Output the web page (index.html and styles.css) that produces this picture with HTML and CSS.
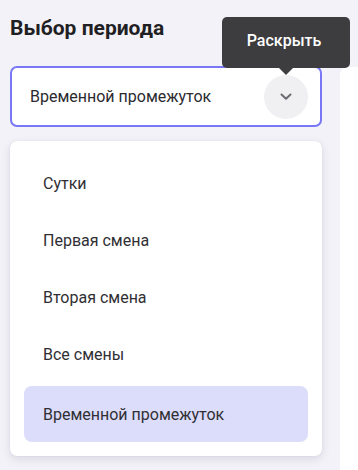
FILE: index.html
```html
<!DOCTYPE html>
<html lang="ru">
<head>
<meta charset="utf-8">
<link rel="stylesheet" href="styles.css">
</head>
<body>
<div class="page">
  <div class="left">
    <h2 class="title">Выбор периода</h2>
    <div class="select">
      <span class="select-value">Временной промежуток</span>
      <button class="toggle" type="button" aria-label="Раскрыть">
        <svg width="12" height="8" viewBox="0 0 12 8"><path d="M1.5 1.5 L6 5.8 L10.5 1.5" fill="none" stroke="#6b6b73" stroke-width="2" stroke-linecap="round" stroke-linejoin="round"/></svg>
        <span class="tooltip">Раскрыть</span>
      </button>
    </div>
    <ul class="menu">
      <li class="item">Сутки</li>
      <li class="item">Первая смена</li>
      <li class="item">Вторая смена</li>
      <li class="item">Все смены</li>
      <li class="item active">Временной промежуток</li>
    </ul>
  </div>
  <div class="side"></div>
</div>
</body>
</html>
```

FILE: styles.css
```css
html, body {
  margin: 0;
  padding: 0;
  background: #f3f2f8;
  font-family: Roboto, "Noto Sans", sans-serif;
  height: 100%;
  overflow: hidden;
}
.page {
  display: flex;
  padding-left: 10px;
  height: 470px;
}
.left {
  width: 312px;
  flex: none;
  padding-top: 14px;
}
.title {
  margin: 0;
  font-size: 21px;
  line-height: 28px;
  font-weight: 700;
  color: #1f1f24;
}
.select {
  margin-top: 24px;
  height: 61px;
  box-sizing: border-box;
  border: 2px solid #7878f6;
  border-radius: 7px;
  background: #fff;
  display: flex;
  align-items: center;
  justify-content: space-between;
  padding: 0 12px 0 18px;
}
.select-value {
  font-size: 16px;
  color: #2b2b2f;
}
.toggle {
  position: relative;
  width: 44px;
  height: 44px;
  border-radius: 50%;
  border: none;
  background: #f0f0f2;
  display: flex;
  align-items: center;
  justify-content: center;
  padding: 0;
}
.tooltip {
  position: absolute;
  bottom: 51px;
  left: 50%;
  transform: translateX(-50%);
  width: 128px;
  height: 51px;
  box-sizing: border-box;
  background: #3d3d3f;
  color: #fff;
  border-radius: 5px;
  font-family: Roboto, sans-serif;
  font-size: 16px;
  font-weight: 500;
  display: flex;
  align-items: center;
  justify-content: center;
  padding: 0 4px 4px 0;
}
.tooltip::after {
  content: "";
  position: absolute;
  top: 100%;
  left: 50%;
  transform: translateX(-50%);
  border-left: 7px solid transparent;
  border-right: 7px solid transparent;
  border-top: 7px solid #3d3d3f;
}
.menu {
  list-style: none;
  margin: 14px 0 0;
  padding: 14px;
  background: #fff;
  border-radius: 7px;
  box-shadow: 0 3px 8px rgba(60, 60, 90, 0.14), 0 0 1px rgba(60,60,90,0.15);
}
.item {
  height: 57px;
  display: flex;
  align-items: center;
  padding-left: 19px;
  font-size: 16px;
  color: #2f2f33;
  border-radius: 8px;
}
.item.active {
  background: #dcdcfb;
  height: 56px;
  margin-top: 3px;
}
.side {
  flex: 1;
  margin-left: 18px;
  margin-top: 67px;
  background: #fff;
  border-top-left-radius: 8px;
}
```
